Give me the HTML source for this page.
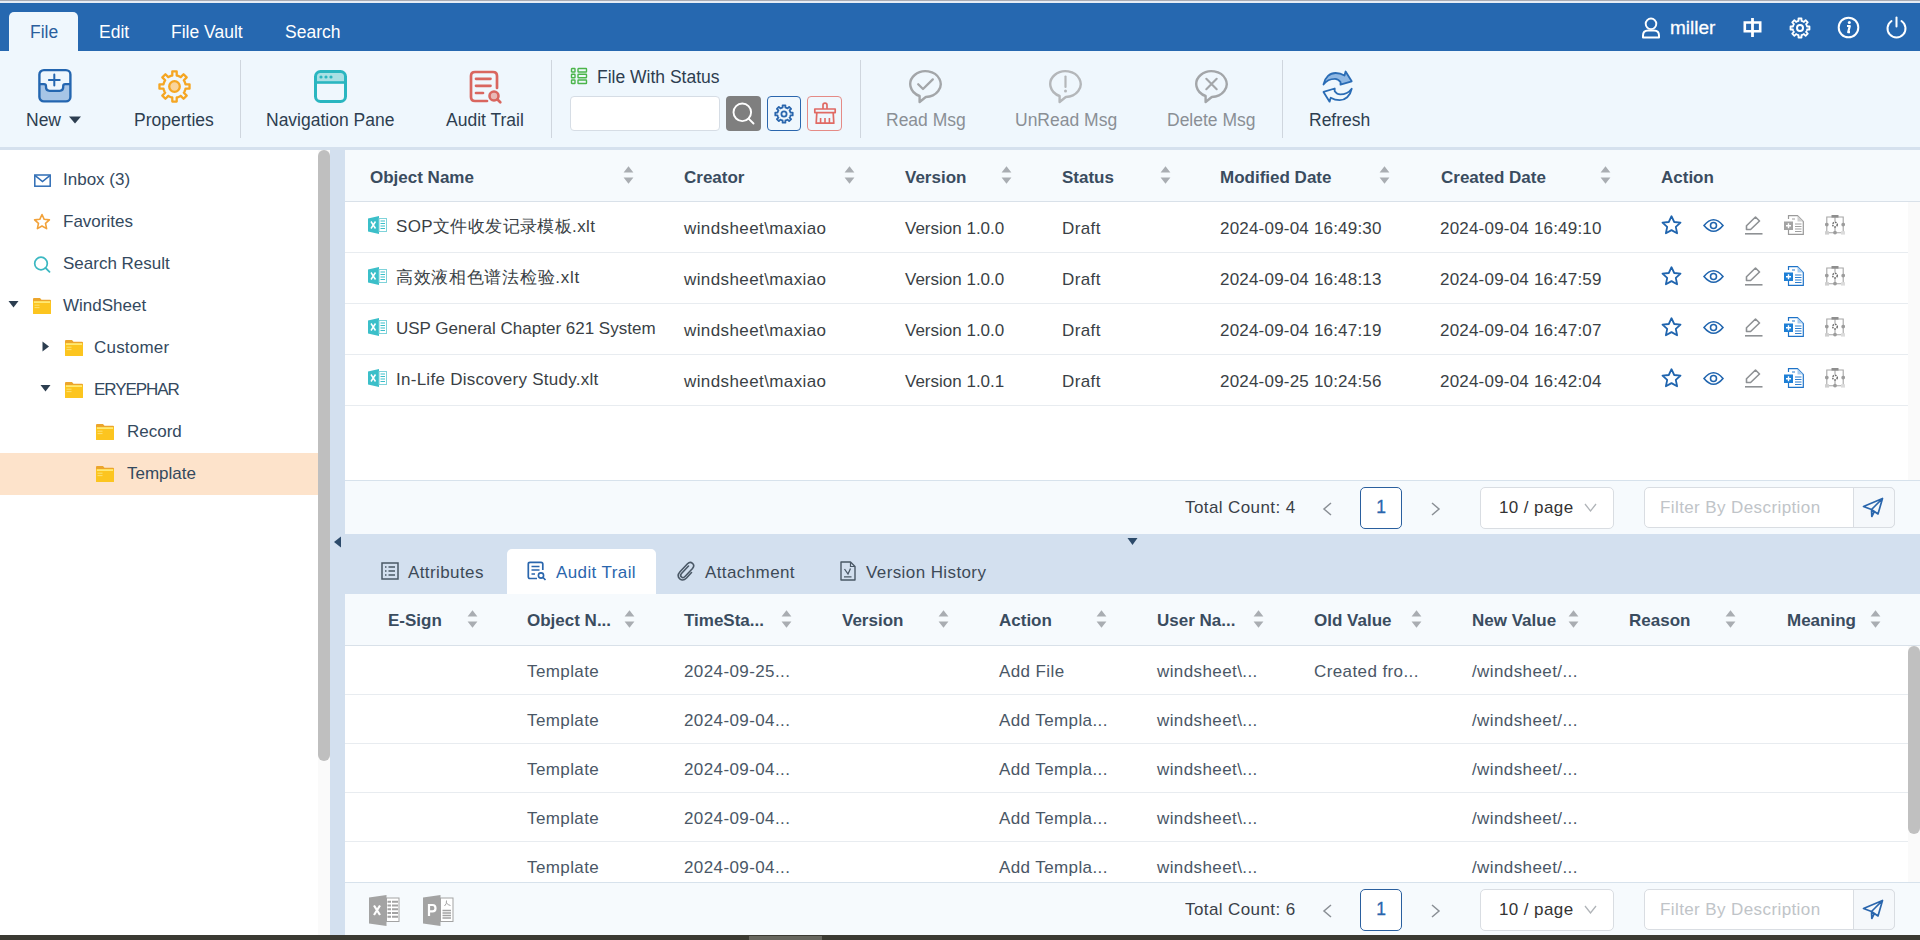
<!DOCTYPE html>
<html><head><meta charset="utf-8">
<style>
*{margin:0;padding:0;box-sizing:border-box}
html,body{width:1920px;height:940px;overflow:hidden;background:#fff;font-family:"Liberation Sans",sans-serif;color:#2d3e50}
.a{position:absolute}
.t{position:absolute;white-space:nowrap;line-height:1}
#top{left:0;top:0;width:1920px;height:3px;background:#e6ecf5;border-top:1px solid #a9abb3}
#hdr{left:0;top:3px;width:1920px;height:48px;background:#2668b0}
.mtab{color:#fff;font-size:17.5px}
#filetab{left:9px;top:12px;width:69px;height:39px;background:#eff7fd;border-radius:5px 5px 0 0}
#tb{left:0;top:51px;width:1920px;height:96px;background:#eff7fd}
#tbb{left:0;top:147px;width:1920px;height:3px;background:#d5e1ee}
.lbl{font-size:17.5px;color:#2d3e50}
.gl{color:#8a8f95}
.sep{width:1px;background:#cfd6de;top:60px;height:78px}
#side{left:0;top:150px;width:318px;height:786px;background:#fff}
.si{font-size:17px;color:#34495e}
#sel{left:0;top:453px;width:318px;height:42px;background:#fde3cb}
#sbtrack{left:318px;top:150px;width:12px;height:786px;background:#fafafa}
#sbthumb{left:318px;top:150px;width:12px;height:611px;background:#bfbfbf;border-radius:6px}
#split{left:330px;top:150px;width:15px;height:786px;background:#d3e0ef}
#main{left:345px;top:150px;width:1575px;height:384px;background:#fff}
.th{background:#f6fafd}
.hd{font-size:17px;font-weight:700;color:#3a4c5f}
.cell{font-size:17px;color:#3a3f45;letter-spacing:0.4px}
.rb{height:1px;background:#e8ecf0}
.lc{color:#4a5766}
.sort{width:11px;height:17px}
#bar{left:0;top:935px;width:1920px;height:5px;background:#3b3a32;border-top:1px solid rgba(59,58,50,0.5)}
</style></head><body>
<div id="top" class="a"></div>
<div id="hdr" class="a"></div>
<div id="filetab" class="a"></div>
<div class="t mtab" style="left:30px;top:24px;color:#2b5f9e">File</div>
<div class="t mtab" style="left:99px;top:24px">Edit</div>
<div class="t mtab" style="left:171px;top:24px">File Vault</div>
<div class="t mtab" style="left:285px;top:24px">Search</div>

<div id="tb" class="a"></div>
<div id="tbb" class="a"></div>
<!-- New -->
<svg class="a" style="left:37px;top:68px" width="35" height="35" viewBox="0 0 35 35">
 <path d="M2.4,16.1 H7 Q9,16.1 9,18.1 V19.3 Q9,22.8 12.5,22.8 H22.7 Q26.2,22.8 26.2,19.3 V18.1 Q26.2,16.1 28.2,16.1 H33.4 V29 Q33.4,33.4 29,33.4 H6.8 Q2.4,33.4 2.4,29 Z" fill="#a7c5e6"/>
 <rect x="2.4" y="2.1" width="31" height="31.3" rx="4.5" fill="none" stroke="#2466b0" stroke-width="2.4"/>
 <path d="M2.4,16.1 H7 Q9,16.1 9,18.1 V19.3 Q9,22.8 12.5,22.8 H22.7 Q26.2,22.8 26.2,19.3 V18.1 Q26.2,16.1 28.2,16.1 H33.4" fill="none" stroke="#2466b0" stroke-width="2.3"/>
 <path d="M17.3,6.6 V17.6 M11.9,12.1 H22.7" stroke="#2466b0" stroke-width="2" stroke-linecap="round"/>
</svg>
<div class="t lbl" style="left:26px;top:112px">New</div>
<svg class="a" style="left:68px;top:115px" width="14" height="10" viewBox="0 0 14 10"><path d="M1,1.5 H13 L7,8.5 Z" fill="#2d3e50"/></svg>
<!-- Properties gear -->
<svg class="a" style="left:157px;top:69px" width="35" height="35" viewBox="-17.5 -17.5 35 35">
 <path id="gearp" d="M-2.20,-10.98 L-2.20,-15.04 L2.20,-15.04 L2.20,-10.98 L2.91,-10.82 L3.60,-10.60 L4.29,-10.35 L4.95,-10.05 L5.59,-9.70 L6.21,-9.32 L9.08,-12.19 L12.19,-9.08 L9.32,-6.21 L9.70,-5.59 L10.05,-4.95 L10.35,-4.29 L10.60,-3.60 L10.82,-2.91 L10.98,-2.20 L15.04,-2.20 L15.04,2.20 L10.98,2.20 L10.82,2.91 L10.60,3.60 L10.35,4.29 L10.05,4.95 L9.70,5.59 L9.32,6.21 L12.19,9.08 L9.08,12.19 L6.21,9.32 L5.59,9.70 L4.95,10.05 L4.29,10.35 L3.60,10.60 L2.91,10.82 L2.20,10.98 L2.20,15.04 L-2.20,15.04 L-2.20,10.98 L-2.91,10.82 L-3.60,10.60 L-4.29,10.35 L-4.95,10.05 L-5.59,9.70 L-6.21,9.32 L-9.08,12.19 L-12.19,9.08 L-9.32,6.21 L-9.70,5.59 L-10.05,4.95 L-10.35,4.29 L-10.60,3.60 L-10.82,2.91 L-10.98,2.20 L-15.04,2.20 L-15.04,-2.20 L-10.98,-2.20 L-10.82,-2.91 L-10.60,-3.60 L-10.35,-4.29 L-10.05,-4.95 L-9.70,-5.59 L-9.32,-6.21 L-12.19,-9.08 L-9.08,-12.19 L-6.21,-9.32 L-5.59,-9.70 L-4.95,-10.05 L-4.29,-10.35 L-3.60,-10.60 L-2.91,-10.82 Z" fill="none" stroke="#f5a623" stroke-width="2.3" stroke-linejoin="round"/>
 <circle r="5.3" fill="#f9d49c" stroke="#f5a623" stroke-width="2.3"/>
</svg>
<div class="t lbl" style="left:134px;top:112px">Properties</div>
<div class="a sep" style="left:240px"></div>
<!-- Navigation pane -->
<svg class="a" style="left:313px;top:69px" width="35" height="35" viewBox="0 0 35 35">
 <path d="M3,8 Q3,3 8,3 H27 Q32,3 32,8 V13 H3 Z" fill="#a9e0e4"/>
 <rect x="2.5" y="2.5" width="30" height="30" rx="5" fill="none" stroke="#2ab6c0" stroke-width="3"/>
 <path d="M3,13.5 H32" stroke="#2ab6c0" stroke-width="2.6"/>
 <circle cx="8" cy="8" r="1.6" fill="#2ab6c0"/><circle cx="13" cy="8" r="1.6" fill="#2ab6c0"/><circle cx="18" cy="8" r="1.6" fill="#2ab6c0"/>
</svg>
<div class="t lbl" style="left:266px;top:112px">Navigation Pane</div>
<!-- Audit trail -->
<svg class="a" style="left:468px;top:69px" width="36" height="36" viewBox="0 0 36 36">
 <path d="M19,32 H7 Q3,32 3,28 V7 Q3,3 7,3 H25 Q29,3 29,7 V19" fill="none" stroke="#d9665f" stroke-width="2.7" stroke-linecap="round"/>
 <path d="M8,9.8 H22.5 M8,16.8 H22.5 M8,24 H15" stroke="#d9665f" stroke-width="2.7" stroke-linecap="round"/>
 <circle cx="26" cy="27" r="4.5" fill="#e8b9b6" stroke="#d9665f" stroke-width="2.6"/>
 <path d="M29.5,30.5 L32.3,33.3" stroke="#d9665f" stroke-width="2.7" stroke-linecap="round"/>
</svg>
<div class="t lbl" style="left:446px;top:112px">Audit Trail</div>
<div class="a sep" style="left:551px"></div>
<!-- File with status -->
<svg class="a" style="left:570px;top:67px" width="18" height="18" viewBox="0 0 18 18">
 <g fill="none" stroke="#4bb54b" stroke-width="1.4">
 <rect x="1.5" y="1.5" width="3.5" height="3.5" rx=".5"/><rect x="1.5" y="7.3" width="3.5" height="3.5" rx=".5"/><rect x="1.5" y="13" width="3.5" height="3.5" rx=".5"/>
 <rect x="8" y="1.5" width="8.5" height="3.5" rx=".5"/><rect x="8" y="7.3" width="8.5" height="3.5" rx=".5"/><rect x="8" y="13" width="8.5" height="3.5" rx=".5"/>
 </g>
</svg>
<div class="t lbl" style="left:597px;top:69px">File With Status</div>
<div class="a" style="left:570px;top:96px;width:150px;height:35px;background:#fff;border:1px solid #d6dde5;border-radius:4px"></div>
<div class="a" style="left:726px;top:96px;width:35px;height:35px;background:#7f7f7f;border-radius:4px"></div>
<svg class="a" style="left:726px;top:96px" width="35" height="35" viewBox="0 0 35 35"><circle cx="16.3" cy="16.3" r="8.8" fill="none" stroke="#fff" stroke-width="1.9"/><path d="M22.6,22.6 L27.5,27.5" stroke="#fff" stroke-width="1.9" stroke-linecap="round"/></svg>
<div class="a" style="left:767px;top:96px;width:34px;height:35px;border:1.3px solid #2a66ad;border-radius:4px"></div>
<svg class="a" style="left:774px;top:104px" width="20" height="20" viewBox="-10 -10 20 20"><path id="gears" d="M-1.40,-6.45 L-1.40,-8.69 L1.40,-8.69 L1.40,-6.45 L1.78,-6.35 L2.16,-6.24 L2.53,-6.10 L2.88,-5.94 L3.23,-5.75 L3.57,-5.55 L5.15,-7.13 L7.13,-5.15 L5.55,-3.57 L5.75,-3.23 L5.94,-2.88 L6.10,-2.53 L6.24,-2.16 L6.35,-1.78 L6.45,-1.40 L8.69,-1.40 L8.69,1.40 L6.45,1.40 L6.35,1.78 L6.24,2.16 L6.10,2.53 L5.94,2.88 L5.75,3.23 L5.55,3.57 L7.13,5.15 L5.15,7.13 L3.57,5.55 L3.23,5.75 L2.88,5.94 L2.53,6.10 L2.16,6.24 L1.78,6.35 L1.40,6.45 L1.40,8.69 L-1.40,8.69 L-1.40,6.45 L-1.78,6.35 L-2.16,6.24 L-2.53,6.10 L-2.88,5.94 L-3.23,5.75 L-3.57,5.55 L-5.15,7.13 L-7.13,5.15 L-5.55,3.57 L-5.75,3.23 L-5.94,2.88 L-6.10,2.53 L-6.24,2.16 L-6.35,1.78 L-6.45,1.40 L-8.69,1.40 L-8.69,-1.40 L-6.45,-1.40 L-6.35,-1.78 L-6.24,-2.16 L-6.10,-2.53 L-5.94,-2.88 L-5.75,-3.23 L-5.55,-3.57 L-7.13,-5.15 L-5.15,-7.13 L-3.57,-5.55 L-3.23,-5.75 L-2.88,-5.94 L-2.53,-6.10 L-2.16,-6.24 L-1.78,-6.35 Z" fill="none" stroke="#2a66ad" stroke-width="1.8" stroke-linejoin="round"/><circle r="2.6" fill="none" stroke="#2a66ad" stroke-width="1.8"/></svg>
<div class="a" style="left:807px;top:96px;width:35px;height:35px;border:1.3px solid #e58b86;border-radius:4px"></div>
<svg class="a" style="left:813px;top:102px" width="24" height="24" viewBox="0 0 24 24">
 <path d="M10,7 V3 Q10,1.2 12,1.2 Q14,1.2 14,3 V7" fill="none" stroke="#e06a64" stroke-width="1.7"/>
 <rect x="1.8" y="7" width="20.4" height="3.6" fill="none" stroke="#e06a64" stroke-width="1.7" stroke-linejoin="round"/>
 <path d="M3.8,10.6 L3.2,21.2 H20.8 L20.2,10.6" fill="none" stroke="#e06a64" stroke-width="1.7" stroke-linejoin="round"/>
 <path d="M7.6,16 V21 M12,16 V21 M16.4,16 V21" stroke="#e06a64" stroke-width="1.6"/>
</svg>
<div class="a sep" style="left:860px"></div>
<!-- Msg icons -->
<svg class="a" style="left:908px;top:69px" width="35" height="35" viewBox="0 0 35 35">
 <path d="M17.8,28 A15.2,12.9 0 1 0 11.6,27 L11.6,33 Z" fill="none" stroke="#a3a6a9" stroke-width="2.4" stroke-linejoin="round"/>
 <path d="M10.2,15.2 L15,20 L24.8,10.4" fill="none" stroke="#a3a6a9" stroke-width="2.3" stroke-linecap="round" stroke-linejoin="round"/>
</svg>
<div class="t lbl gl" style="left:886px;top:112px">Read Msg</div>
<svg class="a" style="left:1048px;top:69px" width="35" height="35" viewBox="0 0 35 35">
 <path d="M17.8,28 A15.2,12.9 0 1 0 11.6,27 L11.6,33 Z" fill="none" stroke="#b4b7ba" stroke-width="2.4" stroke-linejoin="round"/>
 <path d="M17.5,7.5 V18" stroke="#b4b7ba" stroke-width="2.2" stroke-linecap="round"/><circle cx="17.5" cy="22" r="1.5" fill="#b4b7ba"/>
</svg>
<div class="t lbl gl" style="left:1015px;top:112px">UnRead Msg</div>
<svg class="a" style="left:1194px;top:69px" width="35" height="35" viewBox="0 0 35 35">
 <path d="M17.8,28 A15.2,12.9 0 1 0 11.6,27 L11.6,33 Z" fill="none" stroke="#a3a6a9" stroke-width="2.4" stroke-linejoin="round"/>
 <path d="M12.3,9.8 L22.7,20.2 M22.7,9.8 L12.3,20.2" stroke="#a3a6a9" stroke-width="2.1" stroke-linecap="round"/>
</svg>
<div class="t lbl gl" style="left:1167px;top:112px">Delete Msg</div>
<div class="a sep" style="left:1282px"></div>
<!-- Refresh -->
<svg class="a" style="left:1322px;top:70px" width="32" height="34" viewBox="-1 -1 32 34">
 <path d="M0.5,13.5 C2,6 7,2 12.5,2 C16,2 19,3 21.5,4.5 L22.6,0.5 L28.7,10.3 L17.5,13.7 L17.5,11 C16,9 14,7.8 12,7.8 C7,7.8 3,10 0.5,13.5 Z" fill="#8fb8e4" stroke="#2a6cb5" stroke-width="1.8" stroke-linejoin="round"/>
 <path d="M0.5,13.5 C2,6 7,2 12.5,2 C16,2 19,3 21.5,4.5 L22.6,0.5 L28.7,10.3 L17.5,13.7 L17.5,11 C16,9 14,7.8 12,7.8 C7,7.8 3,10 0.5,13.5 Z" transform="rotate(180 14.6 15.6)" fill="#eff7fd" stroke="#2a6cb5" stroke-width="1.8" stroke-linejoin="round"/>
</svg>
<div class="t lbl" style="left:1309px;top:112px">Refresh</div>
<!-- header right -->
<svg class="a" style="left:1640px;top:16px" width="22" height="24" viewBox="0 0 22 24">
 <circle cx="11" cy="7.8" r="5.3" fill="none" stroke="#fff" stroke-width="1.9"/>
 <path d="M3,21.5 V19.5 Q3,14.5 8,14.5 H14 Q19,14.5 19,19.5 V21.5 Z" fill="none" stroke="#fff" stroke-width="2" stroke-linejoin="round"/>
</svg>
<div class="t" style="left:1670px;top:18px;font-size:19px;color:#fff;-webkit-text-stroke:0.3px #fff">miller</div>
<svg class="a" style="left:1742px;top:17px" width="21" height="21" viewBox="0 0 21 21">
 <path d="M2.8,5.5 H18.2 V14.2 H2.8 Z" fill="none" stroke="#fff" stroke-width="2.6"/><path d="M10.5,1 V20" stroke="#fff" stroke-width="2.8"/>
</svg>
<svg class="a" style="left:1789px;top:17px" width="22" height="22" viewBox="-11 -11 22 22"><path id="gearh" d="M-1.50,-7.04 L-1.50,-9.48 L1.50,-9.48 L1.50,-7.04 L1.93,-6.94 L2.35,-6.81 L2.76,-6.65 L3.16,-6.47 L3.54,-6.27 L3.92,-6.04 L5.64,-7.77 L7.77,-5.64 L6.04,-3.92 L6.27,-3.54 L6.47,-3.16 L6.65,-2.76 L6.81,-2.35 L6.94,-1.93 L7.04,-1.50 L9.48,-1.50 L9.48,1.50 L7.04,1.50 L6.94,1.93 L6.81,2.35 L6.65,2.76 L6.47,3.16 L6.27,3.54 L6.04,3.92 L7.77,5.64 L5.64,7.77 L3.92,6.04 L3.54,6.27 L3.16,6.47 L2.76,6.65 L2.35,6.81 L1.93,6.94 L1.50,7.04 L1.50,9.48 L-1.50,9.48 L-1.50,7.04 L-1.93,6.94 L-2.35,6.81 L-2.76,6.65 L-3.16,6.47 L-3.54,6.27 L-3.92,6.04 L-5.64,7.77 L-7.77,5.64 L-6.04,3.92 L-6.27,3.54 L-6.47,3.16 L-6.65,2.76 L-6.81,2.35 L-6.94,1.93 L-7.04,1.50 L-9.48,1.50 L-9.48,-1.50 L-7.04,-1.50 L-6.94,-1.93 L-6.81,-2.35 L-6.65,-2.76 L-6.47,-3.16 L-6.27,-3.54 L-6.04,-3.92 L-7.77,-5.64 L-5.64,-7.77 L-3.92,-6.04 L-3.54,-6.27 L-3.16,-6.47 L-2.76,-6.65 L-2.35,-6.81 L-1.93,-6.94 Z" fill="none" stroke="#fff" stroke-width="1.8" stroke-linejoin="round"/><circle r="3" fill="none" stroke="#fff" stroke-width="2"/></svg>
<svg class="a" style="left:1837px;top:16px" width="23" height="23" viewBox="0 0 23 23">
 <circle cx="11.5" cy="11.5" r="9.8" fill="none" stroke="#fff" stroke-width="2"/>
 <circle cx="12.3" cy="6.6" r="1.5" fill="#fff"/><path d="M10,10 H12.8 L11.2,16.2 H13" fill="none" stroke="#fff" stroke-width="2.2" stroke-linejoin="round"/>
</svg>
<svg class="a" style="left:1885px;top:16px" width="23" height="23" viewBox="0 0 23 23">
 <path d="M6.5,5 A9,9 0 1 0 16.5,5" fill="none" stroke="#fff" stroke-width="2" stroke-linecap="round"/><path d="M11.5,1.5 V10.5" stroke="#fff" stroke-width="2" stroke-linecap="round"/>
</svg>


<div id="side" class="a"></div>
<div id="sel" class="a"></div>
<div id="sbtrack" class="a"></div>
<div id="sbthumb" class="a"></div>
<div id="split" class="a"></div>
<svg class="a" style="left:34px;top:174px" width="17" height="13" viewBox="0 0 17 13"><rect x="0.8" y="1" width="15.4" height="11.2" fill="none" stroke="#2f6db5" stroke-width="1.5"/><path d="M1.2,1.6 L8.5,7.6 L15.8,1.6" fill="none" stroke="#2f6db5" stroke-width="1.5"/></svg>
<div class="t si" style="left:63px;top:171px">Inbox (3)</div>
<svg class="a" style="left:33px;top:213px" width="18" height="18" viewBox="0 0 18 18"><path d="M9,1.5 L11.2,6.3 L16.4,6.9 L12.5,10.4 L13.6,15.6 L9,13 L4.4,15.6 L5.5,10.4 L1.6,6.9 L6.8,6.3 Z" fill="none" stroke="#f2a23a" stroke-width="1.6" stroke-linejoin="round"/></svg>
<div class="t si" style="left:63px;top:213px">Favorites</div>
<svg class="a" style="left:33px;top:256px" width="18" height="17" viewBox="0 0 18 17"><circle cx="8" cy="7.5" r="6.3" fill="none" stroke="#3bb8c2" stroke-width="1.7"/><path d="M12.6,12 L16.5,15.8" stroke="#3bb8c2" stroke-width="1.8" stroke-linecap="round"/></svg>
<div class="t si" style="left:63px;top:255px">Search Result</div>
<svg class="a" style="left:8px;top:300px" width="11" height="8" viewBox="0 0 11 8"><path d="M0.5,1 H10.5 L5.5,7.5 Z" fill="#2c3e50"/></svg>
<svg class="a" style="left:33px;top:298px" width="18" height="16" viewBox="0 0 18 16"><path d="M0,1 Q0,0 1,0 H7 L8.5,1.8 H17 Q18,1.8 18,2.8 V5 H0 Z" fill="#eca52c"/><rect x="0" y="3" width="18" height="13" rx="0.6" fill="#fcc51f"/><rect x="1" y="3.4" width="16" height="1.4" fill="#fff28c"/><path d="M1.5,7.2 H6.5 M1.5,9.6 H6.5" stroke="#fde47e" stroke-width="0.9"/></svg>
<div class="t si" style="left:63px;top:297px">WindSheet</div>
<svg class="a" style="left:42px;top:341px" width="8" height="11" viewBox="0 0 8 11"><path d="M0.5,0.5 V10.5 L7,5.5 Z" fill="#2c3e50"/></svg>
<svg class="a" style="left:65px;top:340px" width="18" height="16" viewBox="0 0 18 16"><path d="M0,1 Q0,0 1,0 H7 L8.5,1.8 H17 Q18,1.8 18,2.8 V5 H0 Z" fill="#eca52c"/><rect x="0" y="3" width="18" height="13" rx="0.6" fill="#fcc51f"/><rect x="1" y="3.4" width="16" height="1.4" fill="#fff28c"/><path d="M1.5,7.2 H6.5 M1.5,9.6 H6.5" stroke="#fde47e" stroke-width="0.9"/></svg>
<div class="t si" style="left:94px;top:339px;letter-spacing:0.2px">Customer</div>
<svg class="a" style="left:40px;top:384px" width="11" height="8" viewBox="0 0 11 8"><path d="M0.5,1 H10.5 L5.5,7.5 Z" fill="#2c3e50"/></svg>
<svg class="a" style="left:65px;top:382px" width="18" height="16" viewBox="0 0 18 16"><path d="M0,1 Q0,0 1,0 H7 L8.5,1.8 H17 Q18,1.8 18,2.8 V5 H0 Z" fill="#eca52c"/><rect x="0" y="3" width="18" height="13" rx="0.6" fill="#fcc51f"/><rect x="1" y="3.4" width="16" height="1.4" fill="#fff28c"/><path d="M1.5,7.2 H6.5 M1.5,9.6 H6.5" stroke="#fde47e" stroke-width="0.9"/></svg>
<div class="t si" style="left:94px;top:381px;letter-spacing:-1.05px">ERYEPHAR</div>
<svg class="a" style="left:96px;top:424px" width="18" height="16" viewBox="0 0 18 16"><path d="M0,1 Q0,0 1,0 H7 L8.5,1.8 H17 Q18,1.8 18,2.8 V5 H0 Z" fill="#eca52c"/><rect x="0" y="3" width="18" height="13" rx="0.6" fill="#fcc51f"/><rect x="1" y="3.4" width="16" height="1.4" fill="#fff28c"/><path d="M1.5,7.2 H6.5 M1.5,9.6 H6.5" stroke="#fde47e" stroke-width="0.9"/></svg>
<div class="t si" style="left:127px;top:423px">Record</div>
<svg class="a" style="left:96px;top:466px" width="18" height="16" viewBox="0 0 18 16"><path d="M0,1 Q0,0 1,0 H7 L8.5,1.8 H17 Q18,1.8 18,2.8 V5 H0 Z" fill="#eca52c"/><rect x="0" y="3" width="18" height="13" rx="0.6" fill="#fcc51f"/><rect x="1" y="3.4" width="16" height="1.4" fill="#fff28c"/><path d="M1.5,7.2 H6.5 M1.5,9.6 H6.5" stroke="#fde47e" stroke-width="0.9"/></svg>
<div class="t si" style="left:127px;top:465px">Template</div>
<svg class="a" style="left:333px;top:536px" width="9" height="12" viewBox="0 0 9 12"><path d="M8,0.5 V11.5 L1,6 Z" fill="#2c4a6a"/></svg>


<div id="main" class="a"></div>
<div class="a th" style="left:345px;top:150px;width:1575px;height:51px"></div>
<div class="a" style="left:345px;top:201px;width:1575px;height:1px;background:#d9e1e9"></div>
<div class="a" style="left:1908px;top:202px;width:12px;height:278px;background:#fafafa"></div>
<div class="t hd" style="left:370px;top:169px">Object Name</div>
<svg class="a" style="left:623px;top:166px" width="11" height="18" viewBox="0 0 11 18"><path d="M5.5,0.2 L10.4,6.4 H0.6 Z M0.6,11.6 H10.4 L5.5,17.8 Z" fill="#a9adb2"/></svg>
<div class="t hd" style="left:684px;top:169px">Creator</div>
<svg class="a" style="left:844px;top:166px" width="11" height="18" viewBox="0 0 11 18"><path d="M5.5,0.2 L10.4,6.4 H0.6 Z M0.6,11.6 H10.4 L5.5,17.8 Z" fill="#a9adb2"/></svg>
<div class="t hd" style="left:905px;top:169px">Version</div>
<svg class="a" style="left:1001px;top:166px" width="11" height="18" viewBox="0 0 11 18"><path d="M5.5,0.2 L10.4,6.4 H0.6 Z M0.6,11.6 H10.4 L5.5,17.8 Z" fill="#a9adb2"/></svg>
<div class="t hd" style="left:1062px;top:169px">Status</div>
<svg class="a" style="left:1160px;top:166px" width="11" height="18" viewBox="0 0 11 18"><path d="M5.5,0.2 L10.4,6.4 H0.6 Z M0.6,11.6 H10.4 L5.5,17.8 Z" fill="#a9adb2"/></svg>
<div class="t hd" style="left:1220px;top:169px">Modified Date</div>
<svg class="a" style="left:1379px;top:166px" width="11" height="18" viewBox="0 0 11 18"><path d="M5.5,0.2 L10.4,6.4 H0.6 Z M0.6,11.6 H10.4 L5.5,17.8 Z" fill="#a9adb2"/></svg>
<div class="t hd" style="left:1441px;top:169px">Created Date</div>
<svg class="a" style="left:1600px;top:166px" width="11" height="18" viewBox="0 0 11 18"><path d="M5.5,0.2 L10.4,6.4 H0.6 Z M0.6,11.6 H10.4 L5.5,17.8 Z" fill="#a9adb2"/></svg>
<div class="t hd" style="left:1661px;top:169px">Action</div>
<svg class="a" style="left:368px;top:216px" width="19" height="18" viewBox="0 0 19 18"><path d="M0,2.5 L11,0 V18 L0,15.5 Z" fill="#3bbfc9"/><path d="M3,5.5 L7.5,12.5 M7.5,5.5 L3,12.5" stroke="#fff" stroke-width="1.5"/><rect x="11" y="2.5" width="7.5" height="13" fill="#fff" stroke="#7fd3da" stroke-width="1"/><path d="M12.5,5 H17 M12.5,7.5 H17 M12.5,10 H17 M12.5,12.5 H17" stroke="#3bbfc9" stroke-width="1.2"/></svg>
<div class="t cell" style="left:396px;top:218px;letter-spacing:0.38px">SOP文件收发记录模板.xlt</div>
<div class="t cell" style="left:684px;top:220px">windsheet\maxiao</div>
<div class="t cell" style="left:905px;top:220px;letter-spacing:0">Version 1.0.0</div>
<div class="t cell" style="left:1062px;top:220px">Draft</div>
<div class="t cell" style="left:1220px;top:220px;letter-spacing:0.2px">2024-09-04 16:49:30</div>
<div class="t cell" style="left:1440px;top:220px;letter-spacing:0.2px">2024-09-04 16:49:10</div>
<svg class="a" style="left:1661px;top:215px" width="21" height="20" viewBox="0 0 21 20"><path d="M10.5,1.2 L13.2,7 L19.5,7.6 L14.8,11.9 L16.1,18.3 L10.5,15.1 L4.9,18.3 L6.2,11.9 L1.5,7.6 L7.8,7 Z" fill="none" stroke="#1f64ae" stroke-width="1.8" stroke-linejoin="round"/></svg><svg class="a" style="left:1703px;top:218px" width="21" height="15" viewBox="0 0 21 15"><path d="M1,7.5 Q10.5,-4 20,7.5 Q10.5,19 1,7.5 Z" fill="none" stroke="#1f64ae" stroke-width="1.55"/><circle cx="10.5" cy="7.5" r="3" fill="none" stroke="#1f64ae" stroke-width="1.55"/></svg><svg class="a" style="left:1745px;top:216px" width="19" height="19" viewBox="0 0 19 19"><path d="M1.5,13.5 V9.8 L10.5,1 L14.5,5 L5.6,13.5 Z" fill="none" stroke="#8e9194" stroke-width="1.6" stroke-linejoin="round"/><path d="M0,17.8 H17.5" stroke="#8e9194" stroke-width="1.6"/></svg><svg class="a" style="left:1784px;top:215px" width="20" height="20" viewBox="0 0 20 20"><path d="M4.5,4 V0.7 H13.5 L19.3,6.5 V19.3 H4.5 V15" fill="#fff" stroke="#9a9a9a" stroke-width="1.2"/><path d="M13.5,0.7 V6.5 H19.3 Z" fill="#d0d0d0"/><path d="M8,4 H11 M11,9 H17.5 M11,11.5 H17.5 M11,14 H17.5 M11,16.5 H17.5" stroke="#a0a0a0" stroke-width="1.1"/><rect x="0" y="6.5" width="9" height="8.5" fill="#a3a3a3"/><path d="M4.5,8.2 V13.3 M2,10.75 H7" stroke="#fff" stroke-width="1.4"/></svg><svg class="a" style="left:1825px;top:215px" width="20" height="20" viewBox="0 0 20 20"><g stroke="#a6a6a6" stroke-width="1.1" fill="none"><path d="M1.8,2 H18.2 V17.8 H1.8 Z"/><path d="M10,2 V17.8"/></g><rect x="6.5" y="0" width="7" height="2.6" fill="#8e8e8e"/><circle cx="1.8" cy="9.6" r="1.9" fill="#9c9c9c"/><circle cx="18.2" cy="9.6" r="1.9" fill="#9c9c9c"/><circle cx="10" cy="17.6" r="1.9" fill="#9c9c9c"/><rect x="0" y="16.2" width="4" height="3.4" fill="#cfcfcf"/><rect x="16" y="16.2" width="4" height="3.4" fill="#dcdcdc"/><circle cx="10" cy="9.6" r="3.2" fill="#fff"/><circle cx="10" cy="9.6" r="2.3" fill="none" stroke="#707070" stroke-width="1.5" stroke-dasharray="1.6 0.8"/><circle cx="10" cy="9.6" r="1" fill="#fff"/></svg>
<div class="a rb" style="left:345px;top:252px;width:1563px"></div>
<svg class="a" style="left:368px;top:267px" width="19" height="18" viewBox="0 0 19 18"><path d="M0,2.5 L11,0 V18 L0,15.5 Z" fill="#3bbfc9"/><path d="M3,5.5 L7.5,12.5 M7.5,5.5 L3,12.5" stroke="#fff" stroke-width="1.5"/><rect x="11" y="2.5" width="7.5" height="13" fill="#fff" stroke="#7fd3da" stroke-width="1"/><path d="M12.5,5 H17 M12.5,7.5 H17 M12.5,10 H17 M12.5,12.5 H17" stroke="#3bbfc9" stroke-width="1.2"/></svg>
<div class="t cell" style="left:396px;top:269px;letter-spacing:0.7px">高效液相色谱法检验.xlt</div>
<div class="t cell" style="left:684px;top:271px">windsheet\maxiao</div>
<div class="t cell" style="left:905px;top:271px;letter-spacing:0">Version 1.0.0</div>
<div class="t cell" style="left:1062px;top:271px">Draft</div>
<div class="t cell" style="left:1220px;top:271px;letter-spacing:0.2px">2024-09-04 16:48:13</div>
<div class="t cell" style="left:1440px;top:271px;letter-spacing:0.2px">2024-09-04 16:47:59</div>
<svg class="a" style="left:1661px;top:266px" width="21" height="20" viewBox="0 0 21 20"><path d="M10.5,1.2 L13.2,7 L19.5,7.6 L14.8,11.9 L16.1,18.3 L10.5,15.1 L4.9,18.3 L6.2,11.9 L1.5,7.6 L7.8,7 Z" fill="none" stroke="#1f64ae" stroke-width="1.8" stroke-linejoin="round"/></svg><svg class="a" style="left:1703px;top:269px" width="21" height="15" viewBox="0 0 21 15"><path d="M1,7.5 Q10.5,-4 20,7.5 Q10.5,19 1,7.5 Z" fill="none" stroke="#1f64ae" stroke-width="1.55"/><circle cx="10.5" cy="7.5" r="3" fill="none" stroke="#1f64ae" stroke-width="1.55"/></svg><svg class="a" style="left:1745px;top:267px" width="19" height="19" viewBox="0 0 19 19"><path d="M1.5,13.5 V9.8 L10.5,1 L14.5,5 L5.6,13.5 Z" fill="none" stroke="#8e9194" stroke-width="1.6" stroke-linejoin="round"/><path d="M0,17.8 H17.5" stroke="#8e9194" stroke-width="1.6"/></svg><svg class="a" style="left:1784px;top:266px" width="20" height="20" viewBox="0 0 20 20"><path d="M4.5,4 V0.7 H13.5 L19.3,6.5 V19.3 H4.5 V15" fill="#fff" stroke="#1e73c8" stroke-width="1.2"/><path d="M13.5,0.7 V6.5 H19.3 Z" fill="#a9cdf0"/><path d="M8,4 H11 M11,9 H17.5 M11,11.5 H17.5 M11,14 H17.5 M11,16.5 H17.5" stroke="#2d7fd0" stroke-width="1.1"/><rect x="0" y="6.5" width="9" height="8.5" fill="#1d7fd6"/><path d="M4.5,8.2 V13.3 M2,10.75 H7" stroke="#fff" stroke-width="1.4"/></svg><svg class="a" style="left:1825px;top:266px" width="20" height="20" viewBox="0 0 20 20"><g stroke="#a6a6a6" stroke-width="1.1" fill="none"><path d="M1.8,2 H18.2 V17.8 H1.8 Z"/><path d="M10,2 V17.8"/></g><rect x="6.5" y="0" width="7" height="2.6" fill="#8e8e8e"/><circle cx="1.8" cy="9.6" r="1.9" fill="#9c9c9c"/><circle cx="18.2" cy="9.6" r="1.9" fill="#9c9c9c"/><circle cx="10" cy="17.6" r="1.9" fill="#9c9c9c"/><rect x="0" y="16.2" width="4" height="3.4" fill="#cfcfcf"/><rect x="16" y="16.2" width="4" height="3.4" fill="#dcdcdc"/><circle cx="10" cy="9.6" r="3.2" fill="#fff"/><circle cx="10" cy="9.6" r="2.3" fill="none" stroke="#707070" stroke-width="1.5" stroke-dasharray="1.6 0.8"/><circle cx="10" cy="9.6" r="1" fill="#fff"/></svg>
<div class="a rb" style="left:345px;top:303px;width:1563px"></div>
<svg class="a" style="left:368px;top:318px" width="19" height="18" viewBox="0 0 19 18"><path d="M0,2.5 L11,0 V18 L0,15.5 Z" fill="#3bbfc9"/><path d="M3,5.5 L7.5,12.5 M7.5,5.5 L3,12.5" stroke="#fff" stroke-width="1.5"/><rect x="11" y="2.5" width="7.5" height="13" fill="#fff" stroke="#7fd3da" stroke-width="1"/><path d="M12.5,5 H17 M12.5,7.5 H17 M12.5,10 H17 M12.5,12.5 H17" stroke="#3bbfc9" stroke-width="1.2"/></svg>
<div class="t cell" style="left:396px;top:320px;letter-spacing:0px">USP General Chapter 621 System</div>
<div class="t cell" style="left:684px;top:322px">windsheet\maxiao</div>
<div class="t cell" style="left:905px;top:322px;letter-spacing:0">Version 1.0.0</div>
<div class="t cell" style="left:1062px;top:322px">Draft</div>
<div class="t cell" style="left:1220px;top:322px;letter-spacing:0.2px">2024-09-04 16:47:19</div>
<div class="t cell" style="left:1440px;top:322px;letter-spacing:0.2px">2024-09-04 16:47:07</div>
<svg class="a" style="left:1661px;top:317px" width="21" height="20" viewBox="0 0 21 20"><path d="M10.5,1.2 L13.2,7 L19.5,7.6 L14.8,11.9 L16.1,18.3 L10.5,15.1 L4.9,18.3 L6.2,11.9 L1.5,7.6 L7.8,7 Z" fill="none" stroke="#1f64ae" stroke-width="1.8" stroke-linejoin="round"/></svg><svg class="a" style="left:1703px;top:320px" width="21" height="15" viewBox="0 0 21 15"><path d="M1,7.5 Q10.5,-4 20,7.5 Q10.5,19 1,7.5 Z" fill="none" stroke="#1f64ae" stroke-width="1.55"/><circle cx="10.5" cy="7.5" r="3" fill="none" stroke="#1f64ae" stroke-width="1.55"/></svg><svg class="a" style="left:1745px;top:318px" width="19" height="19" viewBox="0 0 19 19"><path d="M1.5,13.5 V9.8 L10.5,1 L14.5,5 L5.6,13.5 Z" fill="none" stroke="#8e9194" stroke-width="1.6" stroke-linejoin="round"/><path d="M0,17.8 H17.5" stroke="#8e9194" stroke-width="1.6"/></svg><svg class="a" style="left:1784px;top:317px" width="20" height="20" viewBox="0 0 20 20"><path d="M4.5,4 V0.7 H13.5 L19.3,6.5 V19.3 H4.5 V15" fill="#fff" stroke="#1e73c8" stroke-width="1.2"/><path d="M13.5,0.7 V6.5 H19.3 Z" fill="#a9cdf0"/><path d="M8,4 H11 M11,9 H17.5 M11,11.5 H17.5 M11,14 H17.5 M11,16.5 H17.5" stroke="#2d7fd0" stroke-width="1.1"/><rect x="0" y="6.5" width="9" height="8.5" fill="#1d7fd6"/><path d="M4.5,8.2 V13.3 M2,10.75 H7" stroke="#fff" stroke-width="1.4"/></svg><svg class="a" style="left:1825px;top:317px" width="20" height="20" viewBox="0 0 20 20"><g stroke="#a6a6a6" stroke-width="1.1" fill="none"><path d="M1.8,2 H18.2 V17.8 H1.8 Z"/><path d="M10,2 V17.8"/></g><rect x="6.5" y="0" width="7" height="2.6" fill="#8e8e8e"/><circle cx="1.8" cy="9.6" r="1.9" fill="#9c9c9c"/><circle cx="18.2" cy="9.6" r="1.9" fill="#9c9c9c"/><circle cx="10" cy="17.6" r="1.9" fill="#9c9c9c"/><rect x="0" y="16.2" width="4" height="3.4" fill="#cfcfcf"/><rect x="16" y="16.2" width="4" height="3.4" fill="#dcdcdc"/><circle cx="10" cy="9.6" r="3.2" fill="#fff"/><circle cx="10" cy="9.6" r="2.3" fill="none" stroke="#707070" stroke-width="1.5" stroke-dasharray="1.6 0.8"/><circle cx="10" cy="9.6" r="1" fill="#fff"/></svg>
<div class="a rb" style="left:345px;top:354px;width:1563px"></div>
<svg class="a" style="left:368px;top:369px" width="19" height="18" viewBox="0 0 19 18"><path d="M0,2.5 L11,0 V18 L0,15.5 Z" fill="#3bbfc9"/><path d="M3,5.5 L7.5,12.5 M7.5,5.5 L3,12.5" stroke="#fff" stroke-width="1.5"/><rect x="11" y="2.5" width="7.5" height="13" fill="#fff" stroke="#7fd3da" stroke-width="1"/><path d="M12.5,5 H17 M12.5,7.5 H17 M12.5,10 H17 M12.5,12.5 H17" stroke="#3bbfc9" stroke-width="1.2"/></svg>
<div class="t cell" style="left:396px;top:371px;letter-spacing:0.27px">In-Life Discovery Study.xlt</div>
<div class="t cell" style="left:684px;top:373px">windsheet\maxiao</div>
<div class="t cell" style="left:905px;top:373px;letter-spacing:0">Version 1.0.1</div>
<div class="t cell" style="left:1062px;top:373px">Draft</div>
<div class="t cell" style="left:1220px;top:373px;letter-spacing:0.2px">2024-09-25 10:24:56</div>
<div class="t cell" style="left:1440px;top:373px;letter-spacing:0.2px">2024-09-04 16:42:04</div>
<svg class="a" style="left:1661px;top:368px" width="21" height="20" viewBox="0 0 21 20"><path d="M10.5,1.2 L13.2,7 L19.5,7.6 L14.8,11.9 L16.1,18.3 L10.5,15.1 L4.9,18.3 L6.2,11.9 L1.5,7.6 L7.8,7 Z" fill="none" stroke="#1f64ae" stroke-width="1.8" stroke-linejoin="round"/></svg><svg class="a" style="left:1703px;top:371px" width="21" height="15" viewBox="0 0 21 15"><path d="M1,7.5 Q10.5,-4 20,7.5 Q10.5,19 1,7.5 Z" fill="none" stroke="#1f64ae" stroke-width="1.55"/><circle cx="10.5" cy="7.5" r="3" fill="none" stroke="#1f64ae" stroke-width="1.55"/></svg><svg class="a" style="left:1745px;top:369px" width="19" height="19" viewBox="0 0 19 19"><path d="M1.5,13.5 V9.8 L10.5,1 L14.5,5 L5.6,13.5 Z" fill="none" stroke="#8e9194" stroke-width="1.6" stroke-linejoin="round"/><path d="M0,17.8 H17.5" stroke="#8e9194" stroke-width="1.6"/></svg><svg class="a" style="left:1784px;top:368px" width="20" height="20" viewBox="0 0 20 20"><path d="M4.5,4 V0.7 H13.5 L19.3,6.5 V19.3 H4.5 V15" fill="#fff" stroke="#1e73c8" stroke-width="1.2"/><path d="M13.5,0.7 V6.5 H19.3 Z" fill="#a9cdf0"/><path d="M8,4 H11 M11,9 H17.5 M11,11.5 H17.5 M11,14 H17.5 M11,16.5 H17.5" stroke="#2d7fd0" stroke-width="1.1"/><rect x="0" y="6.5" width="9" height="8.5" fill="#1d7fd6"/><path d="M4.5,8.2 V13.3 M2,10.75 H7" stroke="#fff" stroke-width="1.4"/></svg><svg class="a" style="left:1825px;top:368px" width="20" height="20" viewBox="0 0 20 20"><g stroke="#a6a6a6" stroke-width="1.1" fill="none"><path d="M1.8,2 H18.2 V17.8 H1.8 Z"/><path d="M10,2 V17.8"/></g><rect x="6.5" y="0" width="7" height="2.6" fill="#8e8e8e"/><circle cx="1.8" cy="9.6" r="1.9" fill="#9c9c9c"/><circle cx="18.2" cy="9.6" r="1.9" fill="#9c9c9c"/><circle cx="10" cy="17.6" r="1.9" fill="#9c9c9c"/><rect x="0" y="16.2" width="4" height="3.4" fill="#cfcfcf"/><rect x="16" y="16.2" width="4" height="3.4" fill="#dcdcdc"/><circle cx="10" cy="9.6" r="3.2" fill="#fff"/><circle cx="10" cy="9.6" r="2.3" fill="none" stroke="#707070" stroke-width="1.5" stroke-dasharray="1.6 0.8"/><circle cx="10" cy="9.6" r="1" fill="#fff"/></svg>
<div class="a rb" style="left:345px;top:405px;width:1563px"></div>
<div class="a" style="left:345px;top:480px;width:1575px;height:1px;background:#d7e2ec"></div>
<div class="a th" style="left:345px;top:481px;width:1575px;height:53px"></div>
<div class="t cell" style="left:1185px;top:499px;color:#3a4048">Total Count: 4</div>
<svg class="a" style="left:1322px;top:502px" width="11" height="14" viewBox="0 0 11 14"><path d="M9,1 L2,7 L9,13" fill="none" stroke="#8a8f95" stroke-width="1.5"/></svg>
<div class="a" style="left:1360px;top:487px;width:42px;height:42px;border:1.3px solid #2a5f9e;border-radius:5px;background:#fff"></div>
<div class="t" style="left:1373px;top:499px;width:16px;text-align:center;font-size:17.5px;color:#2a66ad;font-weight:400;-webkit-text-stroke:0.3px #2a66ad">1</div>
<svg class="a" style="left:1430px;top:502px" width="11" height="14" viewBox="0 0 11 14"><path d="M2,1 L9,7 L2,13" fill="none" stroke="#8a8f95" stroke-width="1.5"/></svg>
<div class="a" style="left:1480px;top:487px;width:134px;height:42px;border:1px solid #d9dde2;border-radius:5px;background:#fff"></div>
<div class="t cell" style="left:1499px;top:499px;color:#333">10 / page</div>
<svg class="a" style="left:1584px;top:503px" width="13" height="9" viewBox="0 0 13 9"><path d="M1,1 L6.5,8 L12,1" fill="none" stroke="#b0b4b8" stroke-width="1.3"/></svg>
<div class="a" style="left:1644px;top:487px;width:251px;height:41px;border:1px solid #d9dde2;border-radius:5px;background:#fff"></div>
<div class="a" style="left:1853px;top:487px;width:42px;height:41px;border:1px solid #d9dde2;border-radius:0 5px 5px 0;background:#f5f8fb"></div>
<div class="t cell" style="left:1660px;top:499px;color:#c0c4c8">Filter By Description</div>
<svg class="a" style="left:1862px;top:497px" width="22" height="21" viewBox="0 0 22 21"><path d="M1.5,9.5 L20.5,1.5 L16,17 L9.5,12.5 Z M9.5,12.5 L20.5,1.5 M9.5,12.5 L9.8,19.5 L12.3,14.5" fill="none" stroke="#2a66ad" stroke-width="1.7" stroke-linejoin="round"/></svg>
<div class="a" style="left:345px;top:534px;width:1575px;height:60px;background:#d3e0ef"></div>
<svg class="a" style="left:1127px;top:537px" width="11" height="9" viewBox="0 0 11 9"><path d="M0.5,1 H10.5 L5.5,8 Z" fill="#2c4a6a"/></svg>
<div class="a" style="left:507px;top:549px;width:149px;height:45px;background:#fff;border-radius:5px 5px 0 0"></div>
<svg class="a" style="left:381px;top:562px" width="18" height="18" viewBox="0 0 18 18"><rect x="1" y="1" width="16" height="16" fill="none" stroke="#4a5866" stroke-width="1.5"/><path d="M4,5 H5.5 M4,9 H5.5 M4,13 H5.5 M7.5,5 H14 M7.5,9 H14 M7.5,13 H14" stroke="#4a5866" stroke-width="1.6"/></svg>
<div class="t cell" style="left:408px;top:564px;color:#3d4a57">Attributes</div>
<svg class="a" style="left:527px;top:561px" width="20" height="20" viewBox="0 0 20 20"><path d="M10,17.5 H3 Q1.3,17.5 1.3,15.8 V3 Q1.3,1.3 3,1.3 H14 Q15.8,1.3 15.8,3 V9" fill="none" stroke="#2a66ad" stroke-width="1.7"/><path d="M4.5,5.5 H12.5 M4.5,9 H12.5 M4.5,13 H8" stroke="#2a66ad" stroke-width="1.6"/><circle cx="14" cy="14.5" r="2.6" fill="none" stroke="#2a66ad" stroke-width="1.6"/><path d="M16,16.5 L18.5,19" stroke="#2a66ad" stroke-width="1.7"/></svg>
<div class="t cell" style="left:556px;top:564px;color:#2a66ad">Audit Trail</div>
<svg class="a" style="left:677px;top:561px" width="19" height="20" viewBox="0 0 19 20"><path d="M11.5,5 L4.5,12.5 Q2.8,14.5 4.5,16 Q6.2,17.5 8,15.5 L15.5,7.5 Q18,4.5 15.5,2.3 Q13,0.2 10.5,2.8 L3,10.8 Q-0.5,14.8 2.8,17.8 Q6,20.5 9.5,17 L14.5,11.5" fill="none" stroke="#4a5866" stroke-width="1.6" stroke-linecap="round"/></svg>
<div class="t cell" style="left:705px;top:564px;color:#3d4a57">Attachment</div>
<svg class="a" style="left:840px;top:561px" width="16" height="20" viewBox="0 0 16 20"><path d="M1,1 H10.5 L15,5.5 V19 H1 Z" fill="none" stroke="#4a5866" stroke-width="1.4" stroke-linejoin="round"/><path d="M10.5,1 V5.5 H15" fill="none" stroke="#4a5866" stroke-width="1.2"/><path d="M4.5,8 L8,13 L10.5,7.5 M4,15.8 H11.5" fill="none" stroke="#4a5866" stroke-width="1.3"/></svg>
<div class="t cell" style="left:866px;top:564px;color:#3d4a57">Version History</div>
<div class="a th" style="left:345px;top:594px;width:1575px;height:51px"></div>
<div class="a" style="left:345px;top:645px;width:1575px;height:1px;background:#d9e1e9"></div>
<div class="a" style="left:345px;top:646px;width:1563px;height:236px;background:#fff"></div>
<div class="a" style="left:1908px;top:646px;width:12px;height:236px;background:#fafafa"></div>
<div class="a" style="left:1908px;top:646px;width:12px;height:188px;background:#c0c0c0;border-radius:6px"></div>
<div class="t hd" style="left:388px;top:612px">E-Sign</div>
<svg class="a" style="left:467px;top:610px" width="11" height="18" viewBox="0 0 11 18"><path d="M5.5,0.2 L10.4,6.4 H0.6 Z M0.6,11.6 H10.4 L5.5,17.8 Z" fill="#a9adb2"/></svg>
<div class="t hd" style="left:527px;top:612px">Object N...</div>
<svg class="a" style="left:624px;top:610px" width="11" height="18" viewBox="0 0 11 18"><path d="M5.5,0.2 L10.4,6.4 H0.6 Z M0.6,11.6 H10.4 L5.5,17.8 Z" fill="#a9adb2"/></svg>
<div class="t hd" style="left:684px;top:612px">TimeSta...</div>
<svg class="a" style="left:781px;top:610px" width="11" height="18" viewBox="0 0 11 18"><path d="M5.5,0.2 L10.4,6.4 H0.6 Z M0.6,11.6 H10.4 L5.5,17.8 Z" fill="#a9adb2"/></svg>
<div class="t hd" style="left:842px;top:612px">Version</div>
<svg class="a" style="left:938px;top:610px" width="11" height="18" viewBox="0 0 11 18"><path d="M5.5,0.2 L10.4,6.4 H0.6 Z M0.6,11.6 H10.4 L5.5,17.8 Z" fill="#a9adb2"/></svg>
<div class="t hd" style="left:999px;top:612px">Action</div>
<svg class="a" style="left:1096px;top:610px" width="11" height="18" viewBox="0 0 11 18"><path d="M5.5,0.2 L10.4,6.4 H0.6 Z M0.6,11.6 H10.4 L5.5,17.8 Z" fill="#a9adb2"/></svg>
<div class="t hd" style="left:1157px;top:612px">User Na...</div>
<svg class="a" style="left:1253px;top:610px" width="11" height="18" viewBox="0 0 11 18"><path d="M5.5,0.2 L10.4,6.4 H0.6 Z M0.6,11.6 H10.4 L5.5,17.8 Z" fill="#a9adb2"/></svg>
<div class="t hd" style="left:1314px;top:612px">Old Value</div>
<svg class="a" style="left:1411px;top:610px" width="11" height="18" viewBox="0 0 11 18"><path d="M5.5,0.2 L10.4,6.4 H0.6 Z M0.6,11.6 H10.4 L5.5,17.8 Z" fill="#a9adb2"/></svg>
<div class="t hd" style="left:1472px;top:612px">New Value</div>
<svg class="a" style="left:1568px;top:610px" width="11" height="18" viewBox="0 0 11 18"><path d="M5.5,0.2 L10.4,6.4 H0.6 Z M0.6,11.6 H10.4 L5.5,17.8 Z" fill="#a9adb2"/></svg>
<div class="t hd" style="left:1629px;top:612px">Reason</div>
<svg class="a" style="left:1725px;top:610px" width="11" height="18" viewBox="0 0 11 18"><path d="M5.5,0.2 L10.4,6.4 H0.6 Z M0.6,11.6 H10.4 L5.5,17.8 Z" fill="#a9adb2"/></svg>
<div class="t hd" style="left:1787px;top:612px">Meaning</div>
<svg class="a" style="left:1870px;top:610px" width="11" height="18" viewBox="0 0 11 18"><path d="M5.5,0.2 L10.4,6.4 H0.6 Z M0.6,11.6 H10.4 L5.5,17.8 Z" fill="#a9adb2"/></svg>
<div class="t cell lc" style="left:527px;top:663px">Template</div>
<div class="t cell lc" style="left:684px;top:663px">2024-09-25...</div>
<div class="t cell lc" style="left:999px;top:663px">Add File</div>
<div class="t cell lc" style="left:1157px;top:663px">windsheet\...</div>
<div class="t cell lc" style="left:1314px;top:663px">Created fro...</div>
<div class="t cell lc" style="left:1472px;top:663px">/windsheet/...</div>
<div class="a rb" style="left:345px;top:694px;width:1563px"></div>
<div class="t cell lc" style="left:527px;top:712px">Template</div>
<div class="t cell lc" style="left:684px;top:712px">2024-09-04...</div>
<div class="t cell lc" style="left:999px;top:712px">Add Templa...</div>
<div class="t cell lc" style="left:1157px;top:712px">windsheet\...</div>
<div class="t cell lc" style="left:1472px;top:712px">/windsheet/...</div>
<div class="a rb" style="left:345px;top:743px;width:1563px"></div>
<div class="t cell lc" style="left:527px;top:761px">Template</div>
<div class="t cell lc" style="left:684px;top:761px">2024-09-04...</div>
<div class="t cell lc" style="left:999px;top:761px">Add Templa...</div>
<div class="t cell lc" style="left:1157px;top:761px">windsheet\...</div>
<div class="t cell lc" style="left:1472px;top:761px">/windsheet/...</div>
<div class="a rb" style="left:345px;top:792px;width:1563px"></div>
<div class="t cell lc" style="left:527px;top:810px">Template</div>
<div class="t cell lc" style="left:684px;top:810px">2024-09-04...</div>
<div class="t cell lc" style="left:999px;top:810px">Add Templa...</div>
<div class="t cell lc" style="left:1157px;top:810px">windsheet\...</div>
<div class="t cell lc" style="left:1472px;top:810px">/windsheet/...</div>
<div class="a rb" style="left:345px;top:841px;width:1563px"></div>
<div class="t cell lc" style="left:527px;top:859px">Template</div>
<div class="t cell lc" style="left:684px;top:859px">2024-09-04...</div>
<div class="t cell lc" style="left:999px;top:859px">Add Templa...</div>
<div class="t cell lc" style="left:1157px;top:859px">windsheet\...</div>
<div class="t cell lc" style="left:1472px;top:859px">/windsheet/...</div>
<div class="a" style="left:345px;top:882px;width:1575px;height:1px;background:#d7e2ec"></div>
<div class="a th" style="left:345px;top:883px;width:1575px;height:53px"></div>
<svg class="a" style="left:369px;top:895px" width="31" height="31" viewBox="0 0 31 31"><path d="M0,2.5 L17.5,0 V31 L0,28.5 Z" fill="#a3a3a3"/><path d="M5,10.5 L11,20 M11,10.5 L5,20" stroke="#fff" stroke-width="2.2"/><rect x="17.5" y="3" width="12.5" height="23.5" fill="#fff" stroke="#a3a3a3" stroke-width="1"/><path d="M18.5,6.8 H29 M18.5,10.5 H29 M18.5,14.2 H29 M18.5,18 H29 M18.5,21.7 H29" stroke="#a3a3a3" stroke-width="2"/><path d="M22.5,5 V24" stroke="#fff" stroke-width="1"/></svg>
<svg class="a" style="left:423px;top:895px" width="31" height="31" viewBox="0 0 31 31"><path d="M0,2.5 L17.5,0 V31 L0,28.5 Z" fill="#a3a3a3"/><path d="M6,21 V10 H9.5 Q12.5,10 12.5,13.2 Q12.5,16.4 9.5,16.4 H6" fill="none" stroke="#fff" stroke-width="2.2"/><rect x="17.5" y="3" width="12.5" height="23.5" fill="#fff" stroke="#a3a3a3" stroke-width="1"/><path d="M23.5,5.5 Q24,9 21.5,11 M23.5,8 Q25,10 27.5,10.5" fill="none" stroke="#a3a3a3" stroke-width="1"/><path d="M19.5,15.5 H28 M19.5,18 H28 M19.5,20.5 H28 M19.5,23 H28" stroke="#a3a3a3" stroke-width="1.5"/></svg>
<div class="t cell" style="left:1185px;top:901px;color:#3a4048">Total Count: 6</div>
<svg class="a" style="left:1322px;top:904px" width="11" height="14" viewBox="0 0 11 14"><path d="M9,1 L2,7 L9,13" fill="none" stroke="#8a8f95" stroke-width="1.5"/></svg>
<div class="a" style="left:1360px;top:889px;width:42px;height:42px;border:1.3px solid #2a5f9e;border-radius:5px;background:#fff"></div>
<div class="t" style="left:1373px;top:901px;width:16px;text-align:center;font-size:17.5px;color:#2a66ad;font-weight:400;-webkit-text-stroke:0.3px #2a66ad">1</div>
<svg class="a" style="left:1430px;top:904px" width="11" height="14" viewBox="0 0 11 14"><path d="M2,1 L9,7 L2,13" fill="none" stroke="#8a8f95" stroke-width="1.5"/></svg>
<div class="a" style="left:1480px;top:889px;width:134px;height:42px;border:1px solid #d9dde2;border-radius:5px;background:#fff"></div>
<div class="t cell" style="left:1499px;top:901px;color:#333">10 / page</div>
<svg class="a" style="left:1584px;top:905px" width="13" height="9" viewBox="0 0 13 9"><path d="M1,1 L6.5,8 L12,1" fill="none" stroke="#b0b4b8" stroke-width="1.3"/></svg>
<div class="a" style="left:1644px;top:889px;width:251px;height:41px;border:1px solid #d9dde2;border-radius:5px;background:#fff"></div>
<div class="a" style="left:1853px;top:889px;width:42px;height:41px;border:1px solid #d9dde2;border-radius:0 5px 5px 0;background:#f5f8fb"></div>
<div class="t cell" style="left:1660px;top:901px;color:#c0c4c8">Filter By Description</div>
<svg class="a" style="left:1862px;top:899px" width="22" height="21" viewBox="0 0 22 21"><path d="M1.5,9.5 L20.5,1.5 L16,17 L9.5,12.5 Z M9.5,12.5 L20.5,1.5 M9.5,12.5 L9.8,19.5 L12.3,14.5" fill="none" stroke="#2a66ad" stroke-width="1.7" stroke-linejoin="round"/></svg>
<div id="bar" class="a"></div>
<div class="a" style="left:749px;top:936px;width:73px;height:4px;background:#67665e"></div>
</body></html>
